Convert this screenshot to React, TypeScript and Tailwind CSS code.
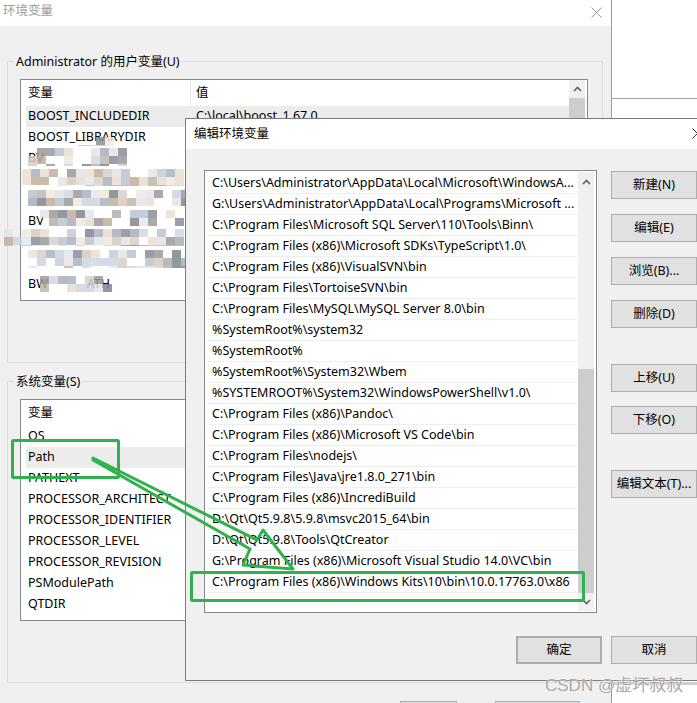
import React from "react";

const innerRows = [
  "C:\\Users\\Administrator\\AppData\\Local\\Microsoft\\WindowsA...",
  "G:\\Users\\Administrator\\AppData\\Local\\Programs\\Microsoft ...",
  "C:\\Program Files\\Microsoft SQL Server\\110\\Tools\\Binn\\",
  "C:\\Program Files (x86)\\Microsoft SDKs\\TypeScript\\1.0\\",
  "C:\\Program Files (x86)\\VisualSVN\\bin",
  "C:\\Program Files\\TortoiseSVN\\bin",
  "C:\\Program Files\\MySQL\\MySQL Server 8.0\\bin",
  "%SystemRoot%\\system32",
  "%SystemRoot%",
  "%SystemRoot%\\System32\\Wbem",
  "%SYSTEMROOT%\\System32\\WindowsPowerShell\\v1.0\\",
  "C:\\Program Files (x86)\\Pandoc\\",
  "C:\\Program Files (x86)\\Microsoft VS Code\\bin",
  "C:\\Program Files\\nodejs\\",
  "C:\\Program Files\\Java\\jre1.8.0_271\\bin",
  "C:\\Program Files (x86)\\IncrediBuild",
  "D:\\Qt\\Qt5.9.8\\5.9.8\\msvc2015_64\\bin",
  "D:\\Qt\\Qt5.9.8\\Tools\\QtCreator",
  "G:\\Program Files (x86)\\Microsoft Visual Studio 14.0\\VC\\bin",
  "C:\\Program Files (x86)\\Windows Kits\\10\\bin\\10.0.17763.0\\x86",
];

const sysRows = [
  "OS",
  "Path",
  "PATHEXT",
  "PROCESSOR_ARCHITECT",
  "PROCESSOR_IDENTIFIER",
  "PROCESSOR_LEVEL",
  "PROCESSOR_REVISION",
  "PSModulePath",
  "QTDIR",
];

const userRows: { name: string; value: string; sel?: boolean }[] = [
  { name: "BOOST_INCLUDEDIR", value: "C:\\local\\boost_1.67.0", sel: true },
  { name: "BOOST_LIBRARYDIR", value: "" },
  { name: "BV", value: "" },
  { name: "", value: "" },
  { name: "", value: "" },
  { name: "BV", value: "" },
  { name: "", value: "" },
  { name: "", value: "" },
  { name: "BW            ATH", value: "" },
];

function rng(seed: number) {
  let a = seed;
  return () => {
    a |= 0;
    a = (a + 0x6d2b79f5) | 0;
    let t = Math.imul(a ^ (a >>> 15), 1 | a);
    t = (t + Math.imul(t ^ (t >>> 7), 61 | t)) ^ t;
    return ((t ^ (t >>> 14)) >>> 0) / 4294967296;
  };
}

const palette = [
  "#c8ccd4", "#a9aeb8", "#d9c9b9", "#e6ddd0", "#b8c4d0", "#9a9a9a", "#d0d8e0",
  "#f0e8dc", "#c0b8a8", "#e4e4e4", "#a8b4c0", "#d8d0c8", "#8a8f99", "#cbd6e2",
  "#bfae9a", "#dfe8f0", "#7f858f", "#eadfcf",
];

function Mosaic() {
  const r = rng(7);
  const bands: [number, number, number, number][] = [
    [78, 112, 137, 146],
    [28, 124, 148, 166],
    [22, 184, 169, 186],
    [28, 184, 190, 206],
    [40, 184, 210, 226],
    [4, 184, 229, 246],
    [28, 186, 250, 268],
    [40, 108, 276, 292],
  ];
  const cells: React.ReactNode[] = [];
  bands.forEach(([x0, x1, y0, y1], bi) => {
    for (let y = y0; y < y1; y += 8) {
      for (let x = x0; x < x1; x += 9) {
        const v = r();
        if (v < 0.25) continue;
        const c = palette[Math.floor(r() * palette.length)];
        cells.push(
          <rect key={`${bi}-${x}-${y}`} x={x} y={y} width={9} height={Math.min(8, y1 - y)} fill={c} opacity={0.85} />
        );
      }
    }
  });
  return (
    <svg className="absolute left-0 top-0 pointer-events-none" width={697} height={703}>
      {cells}
    </svg>
  );
}

function Btn({ children, className = "" }: { children: React.ReactNode; className?: string }) {
  return (
    <div
      className={`h-[28px] w-[86px] shrink-0 flex items-center justify-center bg-[#e1e1e1] border border-[#adadad] text-[12.5px] text-black ${className}`}
    >
      {children}
    </div>
  );
}

function CloseX({ color = "#999" }: { color?: string }) {
  return (
    <svg width="11" height="11" viewBox="0 0 11 11">
      <path d="M0.5 0.5 L10.5 10.5 M10.5 0.5 L0.5 10.5" stroke={color} strokeWidth="1" />
    </svg>
  );
}

function Chevron({ up }: { up?: boolean }) {
  return (
    <svg width="9" height="6" viewBox="0 0 9 6">
      <path d={up ? "M1 5 L4.5 1.5 L8 5" : "M1 1 L4.5 4.5 L8 1"} stroke="#606060" strokeWidth="1.6" fill="none" />
    </svg>
  );
}

export default function App() {
  return (
    <div className="relative w-[697px] h-[703px] overflow-hidden bg-white font-['Noto_Sans','Noto_Sans_CJK_SC',sans-serif] text-[12.5px] text-black">
      {/* Background window on the right */}
      <div className="absolute left-[611px] top-0 w-[86px] h-[703px] bg-white">
        <div className="mt-[98px] h-px bg-[#a0a0a0]" />
        <div className="mt-[583px] h-[3px] bg-[#cfcfcf]" />
      </div>

      {/* Outer window */}
      <div className="relative w-[612px] h-[703px] bg-[#f0f0f0] border-r border-[#9a9a9a] flex flex-col overflow-hidden">
        <div className="h-[26px] bg-white flex items-center justify-between pl-[3px] pr-[9px] pb-[4px] shrink-0">
          <span className="text-[#9c9c9c] leading-[20px]">环境变量</span>
          <div className="pt-[2px]">
            <CloseX />
          </div>
        </div>

        {/* User variables group */}
        <fieldset className="shrink-0 ml-[7px] mt-[27px] w-[596px] h-[310px] border border-[#dcdcdc] pl-[12px] pr-[14px]">
          <legend className="-ml-[6px] px-[2px] leading-[16px] pt-px text-[#000]">Administrator 的用户变量(U)</legend>
          <div className="mt-[9px] h-[222px] bg-white border border-[#828790] flex">
            <div className="flex-1 flex flex-col pl-[5px] pt-px">
              <div className="h-[25px] flex shrink-0">
                <div className="w-[165px] pl-[2px] flex items-center border-r border-[#e5e5e5]">变量</div>
                <div className="pl-[5px] flex items-center">值</div>
              </div>
              {userRows.map((u, i) => (
                <div
                  key={i}
                  className={`h-[21px] shrink-0 flex items-center whitespace-pre ${u.sel ? "bg-[#ececec]" : ""}`}
                >
                  <div className="w-[165px] pl-[2px]">{u.name}</div>
                  <div className="pl-[5px]">{u.value}</div>
                </div>
              ))}
            </div>
            <div className="w-[16px] mr-[2px] bg-[#f0f0f0] flex flex-col items-center">
              <div className="h-[18px] flex items-center">
                <Chevron up />
              </div>
              <div className="w-full flex-1 bg-[#cdcdcd]" />
            </div>
          </div>
        </fieldset>

        {/* System variables group */}
        <fieldset className="shrink-0 ml-[7px] mt-[10px] w-[596px] h-[310px] border border-[#dcdcdc] pl-[12px] pr-[14px]">
          <legend className="-ml-[6px] px-[2px] leading-[16px] pt-px">系统变量(S)</legend>
          <div className="mt-[9px] h-[222px] bg-white border border-[#828790] flex flex-col pl-[5px] pt-px">
            <div className="h-[25px] flex items-center pl-[2px] shrink-0">变量</div>
            {sysRows.map((s) => (
              <div
                key={s}
                className={`h-[21px] shrink-0 flex items-center pl-[2px] ${s === "Path" ? "bg-[#ececec]" : ""}`}
              >
                {s}
              </div>
            ))}
          </div>
        </fieldset>

        <div className="shrink-0 flex pl-[400px] mt-[18px] gap-[38px]">
          <div className="w-[57px] h-[20px] border border-[#adadad] bg-[#e1e1e1]" />
          <div className="w-[85px] h-[20px] border border-[#adadad] bg-[#e1e1e1]" />
        </div>
      </div>

      <Mosaic />

      {/* Edit dialog */}
      <div className="absolute left-[185px] top-[118px] w-[540px] h-[563px] border border-[#7a7a7a] bg-[#f0f0f0] flex flex-col">
        <div className="relative h-[30px] bg-white flex items-center pl-[8px] pt-px shrink-0">
          <span>编辑环境变量</span>
          <div className="absolute left-[506px] top-[9px]">
            <CloseX color="#333" />
          </div>
        </div>
        <div className="flex items-start pl-[18px] shrink-0">
          <div className="mt-[21px] w-[393px] h-[443px] bg-white border border-[#828790] flex p-px">
            <div className="flex-1 flex flex-col pl-px pt-px">
              {innerRows.map((t, i) => (
                <div
                  key={i}
                  className="h-[21px] shrink-0 flex items-center pl-[5px] border-b border-[#efefef] whitespace-nowrap overflow-hidden"
                >
                  {t}
                </div>
              ))}
            </div>
            <div className="w-[16px] ml-px mr-px bg-[#f0f0f0] flex flex-col items-center">
              <div className="h-[20px] flex items-center">
                <Chevron up />
              </div>
              <div className="h-[177px]" />
              <div className="w-full h-[224px] bg-[#cdcdcd]" />
              <div className="flex-1 flex items-center">
                <Chevron />
              </div>
            </div>
          </div>
          <div className="ml-[14px] mt-[22px] flex flex-col">
            <Btn>新建(N)</Btn>
            <Btn className="mt-[15px]">编辑(E)</Btn>
            <Btn className="mt-[15px]">浏览(B)...</Btn>
            <Btn className="mt-[15px]">删除(D)</Btn>
            <Btn className="mt-[36px]">上移(U)</Btn>
            <Btn className="mt-[14px]">下移(O)</Btn>
            <Btn className="mt-[36px]">编辑文本(T)...</Btn>
          </div>
        </div>
        <div className="flex pl-[330px] mt-[23px] gap-[9px] shrink-0">
          <Btn className="border-2 border-[#0078d7]">确定</Btn>
          <Btn>取消</Btn>
        </div>
      </div>

      {/* Green annotations */}
      <svg className="absolute left-0 top-0 pointer-events-none" width={697} height={703}>
        <g fill="none" stroke="#2fb24c" strokeWidth="3" strokeLinejoin="round" strokeLinecap="round">
          <rect x="12.5" y="440.5" width="106" height="37" rx="1" />
          <rect x="191.5" y="572.5" width="392" height="28" rx="1" />
          <path d="M93 458 L257 540 L263 530 L293 569 L243 565 L250 549 L93 460" />
        </g>
      </svg>

      {/* Watermark */}
      <div className="absolute left-[545px] top-[675px] text-[17px] leading-[22px] text-[#a8a8a8] [text-shadow:0_0_2px_#ffffff] font-['Liberation_Sans','Noto_Sans_CJK_SC',sans-serif]">
        CSDN @虚坏叔叔
      </div>
    </div>
  );
}
